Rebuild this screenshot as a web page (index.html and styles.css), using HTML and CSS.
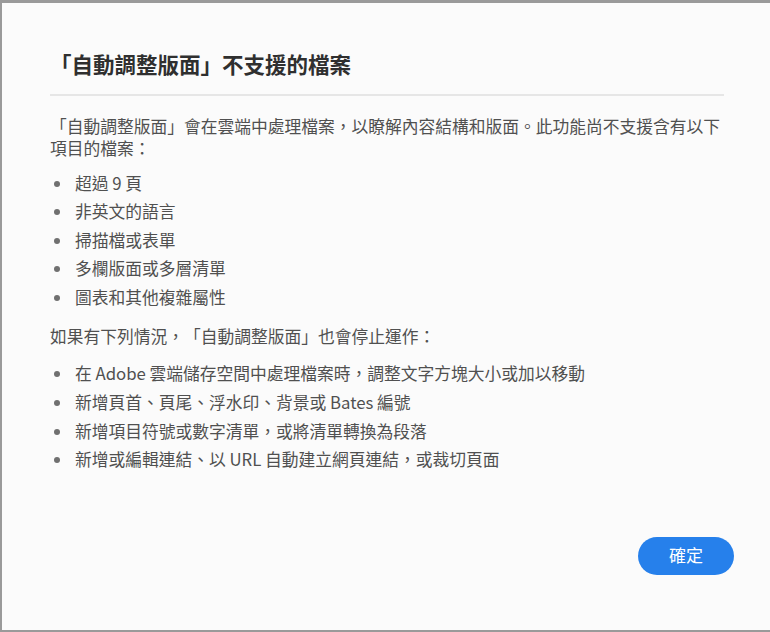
FILE: index.html
```html
<!DOCTYPE html>
<html lang="zh-TW">

<head>
    <meta charset="UTF-8">
    <meta name="viewport" content="width=device-width, initial-scale=1.0">
    <title>不支援的檔案</title>
    <link rel="stylesheet" href="styles.css">
</head>

<body>
    <div class="dialog">
        <div class="dialog-body">
            <h1 class="dialog-title">「自動調整版面」不支援的檔案</h1>
            <hr class="dialog-divider">
            <p class="dialog-text">「自動調整版面」會在雲端中處理檔案，以瞭解內容結構和版面。此功能尚不支援含有以下項目的檔案：</p>
            <ul class="dialog-list">
                <li>超過 9 頁</li>
                <li>非英文的語言</li>
                <li>掃描檔或表單</li>
                <li>多欄版面或多層清單</li>
                <li>圖表和其他複雜屬性</li>
            </ul>
            <p class="dialog-text">如果有下列情況，「自動調整版面」也會停止運作：</p>
            <ul class="dialog-list dialog-list-second">
                <li>在 Adobe 雲端儲存空間中處理檔案時，調整文字方塊大小或加以移動</li>
                <li>新增頁首、頁尾、浮水印、背景或 Bates 編號</li>
                <li>新增項目符號或數字清單，或將清單轉換為段落</li>
                <li>新增或編輯連結、以 URL 自動建立網頁連結，或裁切頁面</li>
            </ul>
        </div>
        <div class="dialog-footer">
            <button class="btn-primary">確定</button>
        </div>
    </div>
</body>

</html>
```

FILE: styles.css
```css
html,
body {
    margin: 0;
    height: 100%;
}

body {
    font-family: "Noto Sans CJK TC", "Noto Sans", sans-serif;
    background-color: #fbfbfb;
    color: #505050;
    text-spacing-trim: space-all;
}

.dialog {
    box-sizing: border-box;
    height: 632px;
    border-top: 3px solid #9a9a9a;
    border-left: 2px solid #9a9a9a;
    border-bottom: 2px solid #9a9a9a;
    display: flex;
    flex-direction: column;
}

.dialog-body {
    padding: 47px 46px 0 48px;
}

.dialog-title {
    margin: 0;
    font-size: 21.5px;
    line-height: 28px;
    font-weight: 700;
    color: #2f2f2f;
}

.dialog-divider {
    margin: 16px 0 0;
    border: none;
    height: 2px;
    background: #e6e6e6;
}

.dialog-text {
    margin: 0;
    font-size: 16.75px;
    line-height: 22px;
}

.dialog-divider + .dialog-text {
    margin-top: 18.5px;
}

.dialog-list {
    list-style: none;
    margin: 10px 0 14px;
    padding: 0;
    font-size: 16.75px;
}

.dialog-list-second {
    margin-top: 12px;
}

.dialog-list li {
    position: relative;
    padding-left: 25px;
    line-height: 28.6px;
}

.dialog-list li::before {
    content: "";
    position: absolute;
    left: 4px;
    top: 12px;
    width: 6px;
    height: 6px;
    border-radius: 50%;
    background: #707070;
}

.dialog-footer {
    margin-top: auto;
    display: flex;
    justify-content: flex-end;
    padding: 0 36px 55px;
}

.btn-primary {
    width: 96px;
    height: 38px;
    padding: 0 0 4px;
    border: none;
    border-radius: 19px;
    background: #2680eb;
    color: #ffffff;
    font-family: inherit;
    font-size: 17px;
    line-height: 1;
    cursor: pointer;
}
```
